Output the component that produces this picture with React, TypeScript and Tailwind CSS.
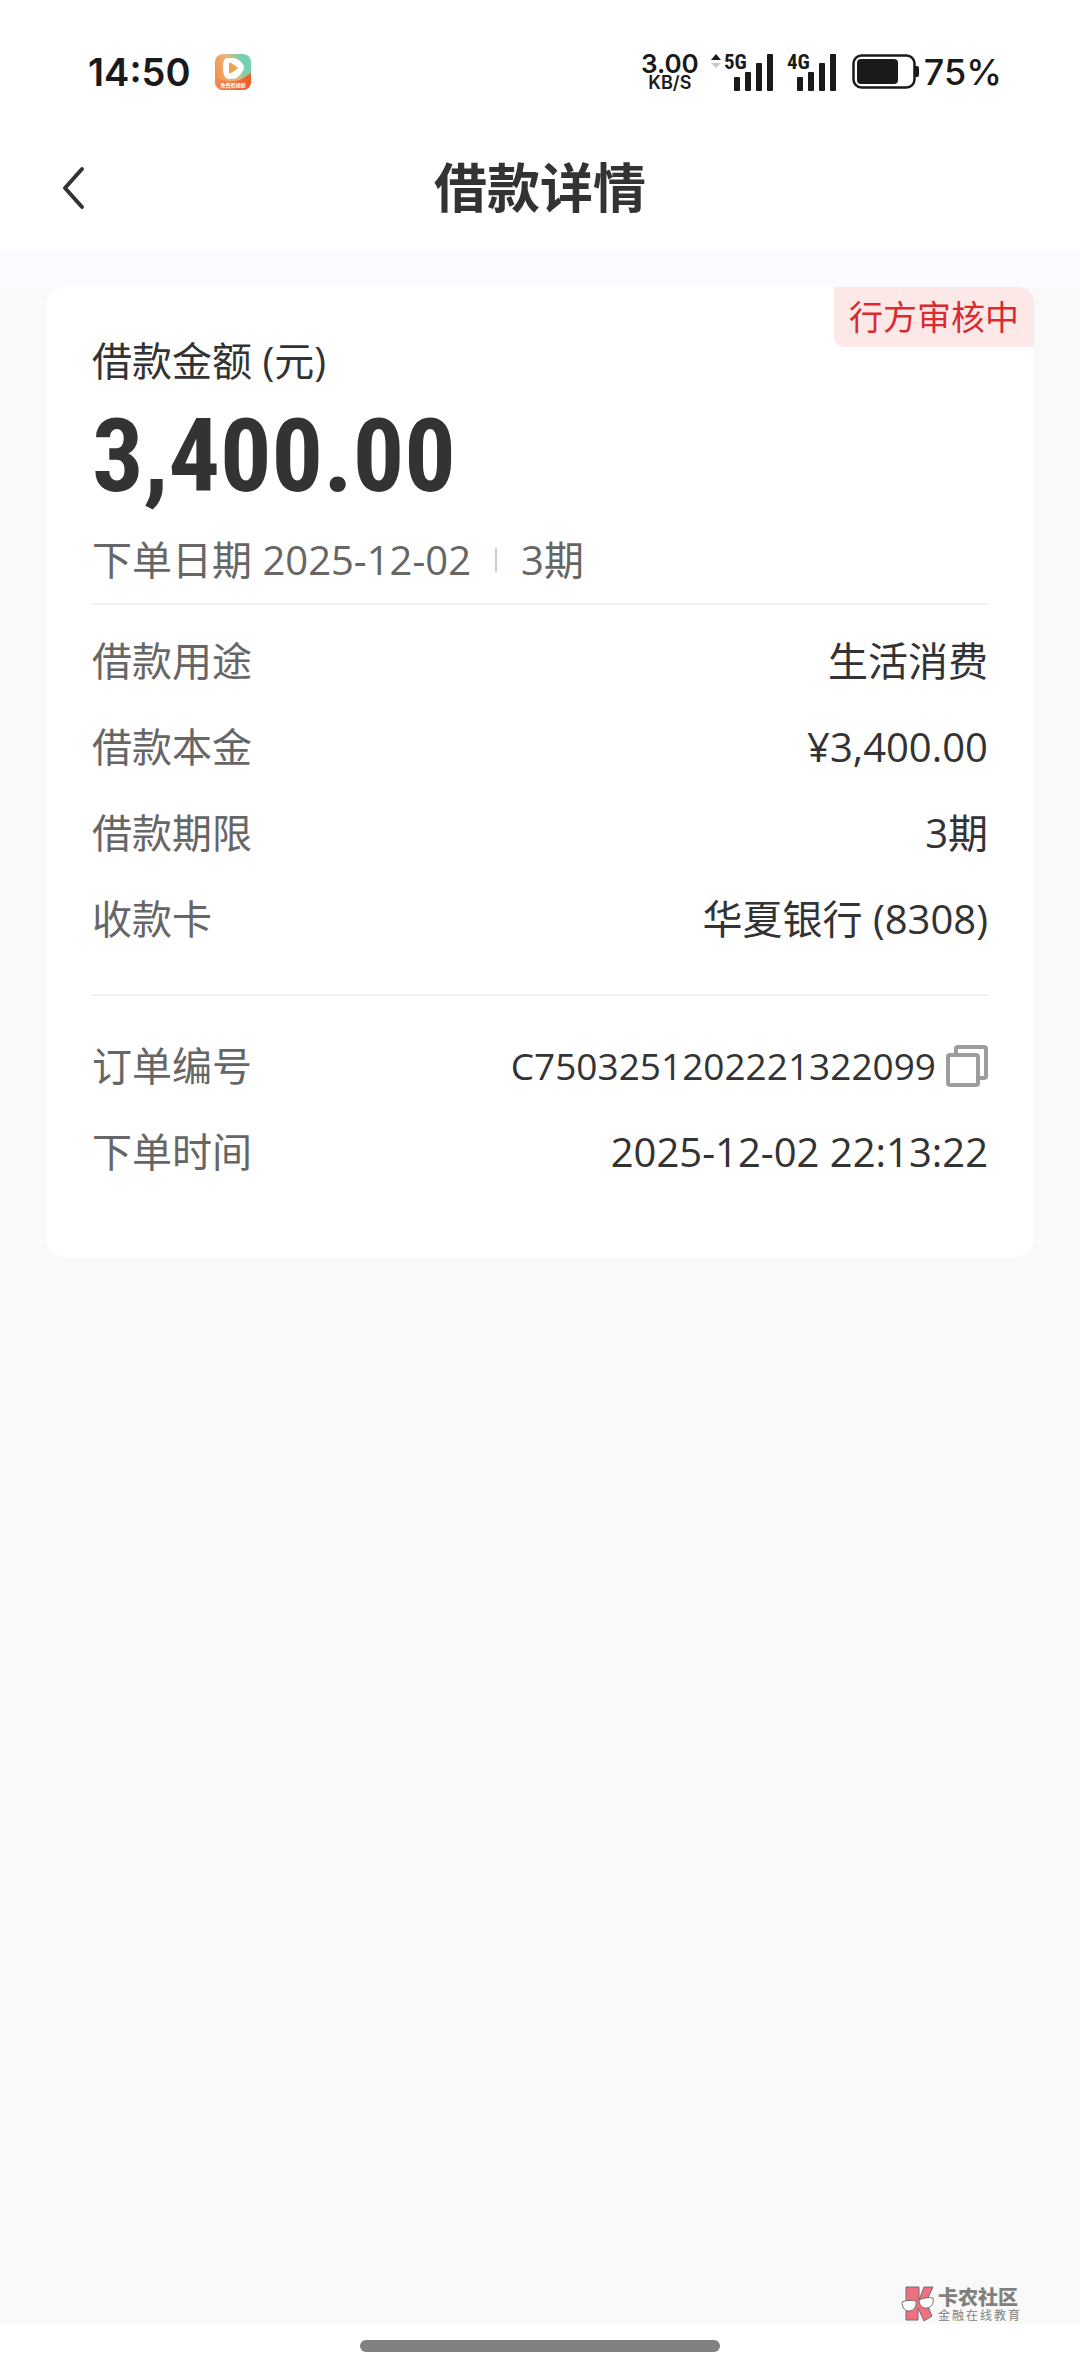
import React from "react";

interface DetailRow {
  label: string;
  value: string;
}

const loanRows: DetailRow[] = [
  { label: "借款用途", value: "生活消费" },
  { label: "借款本金", value: "¥3,400.00" },
  { label: "借款期限", value: "3期" },
  { label: "收款卡", value: "华夏银行 (8308)" },
];

const orderNo = "C7503251202221322099";

/* Signal bars with the network label on top */
const Signal: React.FC<{ network: string; arrows?: boolean }> = ({
  network,
  arrows,
}) => (
  <svg width="62" height="48" viewBox="0 -6 62 48" fill="#1a1a1a">
    {arrows && (
      <>
        <path d="M0 6 5 0l5 6z" />
        <path d="M0 9h10l-5 5z" fill="#c9c9c9" />
      </>
    )}
    <text
      x="13"
      y="15"
      fontFamily="'Roboto Condensed', Roboto, sans-serif"
      fontSize="21"
      fontWeight="700"
    >
      {network}
    </text>
    <rect x="23" y="23" width="6" height="14" rx="1" />
    <rect x="34" y="18" width="6" height="19" rx="1" />
    <rect x="45" y="9" width="6" height="28" rx="1" />
    <rect x="56" y="0" width="6" height="37" rx="1" />
  </svg>
);

const Battery = () => (
  <svg width="68" height="36" viewBox="0 0 68 36" fill="none">
    <rect x="1.5" y="1.5" width="61" height="32" rx="8" stroke="#1a1a1a" strokeWidth="2.5" />
    <rect x="5" y="5" width="41" height="25" rx="4" fill="#1a1a1a" />
    <path d="M63 12h2a2 2 0 0 1 2 2v7a2 2 0 0 1-2 2h-2z" fill="#1a1a1a" />
  </svg>
);

/* Video app icon shown next to the clock */
const VideoAppIcon = () => (
  <svg width="38" height="38" viewBox="0 0 38 38">
    <defs>
      <linearGradient id="appBg" x1="0" y1="0.6" x2="1" y2="0.2">
        <stop offset="0" stopColor="#f6914a" />
        <stop offset="0.45" stopColor="#e9b57c" />
        <stop offset="0.8" stopColor="#74d0ae" />
      </linearGradient>
      <linearGradient id="appWave" x1="0" y1="0" x2="1" y2="0">
        <stop offset="0" stopColor="#f7894c" />
        <stop offset="1" stopColor="#ee5a2a" />
      </linearGradient>
    </defs>
    <rect x="1" y="1" width="36" height="36" rx="8" fill="url(#appBg)" />
    <path d="M1 25c8 3 14 4 20 3s10-4 16-8v9a8 8 0 0 1-8 8H9a8 8 0 0 1-8-8z" fill="url(#appWave)" />
    <path
      d="M14 5h5c4 0 11 5 11 9s-6 12-11 12h-4c-4 0-6-4-6-11s1-10 5-10z"
      fill="#fff"
    />
    <path d="M15 11c0-1 1-2 2-1l6 4c1 1 1 1 0 2l-6 4c-1 1-2 0-2-1z" fill="#f0a04e" />
    <text x="19" y="34" textAnchor="middle" fontFamily="'Noto Sans CJK SC', sans-serif" fontSize="5" fontWeight="700" fill="#fff">
      免费看短剧
    </text>
  </svg>
);

const StatusBar = () => (
  <div className="flex h-36 items-center justify-between pl-[88px] pr-[78px] font-['Inter',sans-serif] text-[#1a1a1a]">
    <div className="flex items-center gap-6">
      <span className="text-[38px] font-semibold">14:50</span>
      <VideoAppIcon />
    </div>
    <div className="flex items-center">
      <div className="flex flex-col items-center font-semibold">
        <span className="text-[26px] leading-[21px]">3.00</span>
        <span className="text-[18px] leading-[18px]">KB/S</span>
      </div>
      <div className="ml-3 flex items-center gap-[1px]">
        <Signal network="5G" arrows />
        <Signal network="4G" />
      </div>
      <div className="ml-4 flex items-center gap-1">
        <Battery />
        <span className="text-[36px] font-medium">75%</span>
      </div>
    </div>
  </div>
);

const Row: React.FC<{ label: string; children: React.ReactNode }> = ({
  label,
  children,
}) => (
  <div className="flex h-[86px] items-center justify-between">
    <dt className="text-[#666666]">{label}</dt>
    <dd className="flex items-center gap-[10px] text-[#333333]">{children}</dd>
  </div>
);

const CopyIcon = () => (
  <svg width="42" height="42" viewBox="0 0 42 42" fill="none" stroke="#9c9c9c" strokeWidth="4" strokeLinejoin="round">
    <path d="M10 9V4a2 2 0 0 1 2-2h26a2 2 0 0 1 2 2v27a2 2 0 0 1-2 2h-5" />
    <rect x="2" y="10" width="30" height="30" rx="2" />
  </svg>
);

const Watermark = () => (
  <div className="absolute bottom-[2px] right-[58px] flex items-center gap-[3px] font-['Noto_Sans_CJK_SC',sans-serif]">
    <svg width="34" height="36" viewBox="0 0 34 36" stroke="#6f6f6f" strokeWidth="1">
      <path d="M5 1h13v13L23 1h9l-7 15 6 14-8 5-6-13v12H5z" fill="#f0707f" />
      <path d="M1 16c4-2 10-2 14-1 1 5-2 10-7 10s-7-5-7-9z" fill="#fff" />
      <path d="M18 14c4-2 10-3 14-2 1 5-1 9-6 10s-8-4-8-8z" fill="#fff" />
    </svg>
    <div className="text-[#808080]">
      <p className="text-[20px] font-black leading-[22px]">卡农社区</p>
      <p className="text-[12px] leading-[14px] tracking-[2px]">金融在线教育</p>
    </div>
  </div>
);

const App: React.FC = () => {
  const handleCopy = () => {
    navigator.clipboard?.writeText(orderNo);
  };

  return (
    <div className="flex min-h-screen flex-col bg-[#f9f9f9] font-['Open_Sans','Noto_Sans_CJK_SC',sans-serif] text-[40px] leading-[60px]">
      <header className="bg-white">
        <StatusBar />
        <div className="grid h-[108px] grid-cols-3 items-start px-[54px] pt-[11px]">
          <button aria-label="返回" className="flex h-[66px] w-[40px] items-center justify-center">
            <svg width="26" height="44" viewBox="0 0 26 44" fill="none" stroke="#333" strokeWidth="4" strokeLinecap="round" strokeLinejoin="round">
              <path d="M21 3 4 22l17 19" />
            </svg>
          </button>
          <h1 className="text-center text-[53px] font-bold leading-[66px] text-[#333333]">
            借款详情
          </h1>
        </div>
      </header>

      <main className="relative flex-1">
        <div className="h-[35px] bg-[#f9fbff]" />

        <section className="relative mx-[46px] rounded-[20px] bg-white px-[46px] pb-[62px] pt-11">
          <span className="absolute right-0 top-0 rounded-bl-[10px] rounded-tr-[16px] bg-[#fde8e8] px-[15px] text-[34px] text-[#d92b30]">
            行方审核中
          </span>

          <h2 className="text-[#333333]">借款金额 (元)</h2>
          <p className="mb-2 font-['Roboto_Condensed','Open_Sans_Condensed','Noto_Sans_Condensed',sans-serif] text-[102px] font-bold leading-[131px] text-[#333333]">
            3,400.00
          </p>
          <div className="flex items-center border-b-2 border-[#f1f1f1] pb-[13px] text-[#666666]">
            <span>下单日期 2025-12-02</span>
            <i className="mx-6 h-6 w-[2px] bg-[#cccccc]" />
            <span>3期</span>
          </div>

          <dl className="pb-8 pt-[13px]">
            {loanRows.map((row) => (
              <Row key={row.label} label={row.label}>
                {row.value}
              </Row>
            ))}
          </dl>
          <dl className="border-t-2 border-[#f1f1f1] pt-[27px]">
            <Row label="订单编号">
              <span className="text-[37px]">{orderNo}</span>
              <button aria-label="复制" onClick={handleCopy}>
                <CopyIcon />
              </button>
            </Row>
            <Row label="下单时间">2025-12-02 22:13:22</Row>
          </dl>
        </section>

        <Watermark />
      </main>

      {/* Gesture bar */}
      <footer className="flex h-[49px] justify-center bg-white pt-4">
        <div className="h-3 w-1/3 rounded-full bg-[#808080]" />
      </footer>
    </div>
  );
};

export default App;
